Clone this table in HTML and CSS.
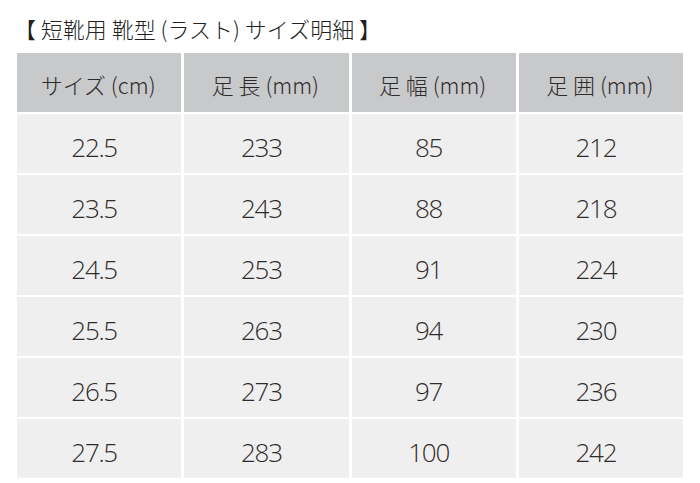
FILE: index.html
```html
<!DOCTYPE html>
<html lang="ja">
<head>
<meta charset="utf-8">
<link rel="stylesheet" href="styles.css">
</head>
<body>
<div class="page">
  <h1 class="title">【 短靴用 靴型 (ラスト) サイズ明細 】</h1>
  <div class="grid">
    <div class="cell head">サイズ (cm)</div>
    <div class="cell head">足 長 (mm)</div>
    <div class="cell head">足 幅 (mm)</div>
    <div class="cell head">足 囲 (mm)</div>

    <div class="cell">22.5</div><div class="cell">233</div><div class="cell">85</div><div class="cell">212</div>
    <div class="cell">23.5</div><div class="cell">243</div><div class="cell">88</div><div class="cell">218</div>
    <div class="cell">24.5</div><div class="cell">253</div><div class="cell">91</div><div class="cell">224</div>
    <div class="cell">25.5</div><div class="cell">263</div><div class="cell">94</div><div class="cell">230</div>
    <div class="cell">26.5</div><div class="cell">273</div><div class="cell">97</div><div class="cell">236</div>
    <div class="cell">27.5</div><div class="cell">283</div><div class="cell">100</div><div class="cell">242</div>
  </div>
</div>
</body>
</html>
```

FILE: styles.css
```css
html, body {
  margin: 0;
  padding: 0;
  background: #ffffff;
}
.page {
  padding: 13px 17px 0 17px;
  font-family: "Open Sans", "Noto Sans CJK JP", sans-serif;
  color: #2f2b2b;
}
.title {
  margin: 0 0 0 -3px;
  height: 40px;
  font-family: "Noto Sans CJK JP", sans-serif;
  font-weight: 300;
  font-size: 22px;
  line-height: 30px;
  letter-spacing: 0;
  color: #231f1f;
}
.grid {
  width: 666px;
  display: grid;
  grid-template-columns: repeat(4, 1fr);
  grid-auto-rows: 59px;
  column-gap: 3px;
  row-gap: 2px;
}
.cell {
  background: #efefef;
  display: flex;
  align-items: center;
  justify-content: center;
  font-weight: 300;
  font-size: 26px;
  letter-spacing: -1.3px;
  padding-top: 6px;
  padding-right: 10px;
  box-sizing: border-box;
}
.head {
  background: #c8c9cb;
  font-family: "Noto Sans CJK JP", sans-serif;
  font-size: 22px;
  letter-spacing: 0;
  padding-top: 2px;
  padding-right: 2px;
}
```
